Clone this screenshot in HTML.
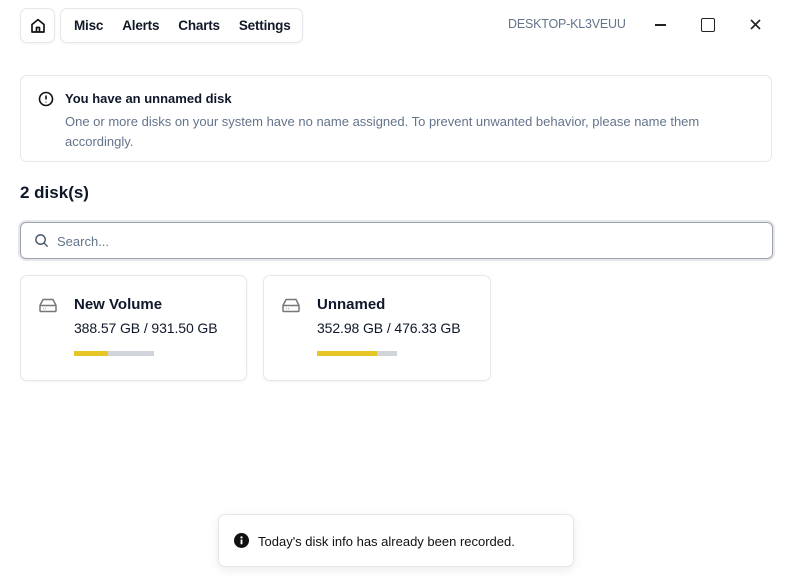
<!DOCTYPE html>
<html><head><style>
*{box-sizing:border-box;margin:0;padding:0}
body{width:793px;height:588px;background:#fff;font-family:"Liberation Sans",sans-serif;color:#0f172a;position:relative;overflow:hidden}
.abs{position:absolute}
.box{border:1px solid #e5e7eb;border-radius:7px;background:#fff;box-shadow:0 1px 2px rgba(0,0,0,.05)}
.nav a{font-size:13.5px;font-weight:600;color:#111827;margin-right:19px;letter-spacing:-0.2px}
</style></head><body>
<div class="abs box" style="left:20px;top:8px;width:35px;height:35px;display:flex;align-items:center;justify-content:center">
<svg width="18" height="18" viewBox="0 0 24 24" fill="none" stroke="#111" stroke-width="2.2" stroke-linejoin="round"><path d="M4 10l8-6.5 8 6.5v10H4z"/><path d="M10 20v-6h4v6"/></svg></div>
<div class="abs box nav" style="left:60px;top:8px;width:243px;height:35px;display:flex;align-items:center;padding-left:13px"><a>Misc</a><a>Alerts</a><a>Charts</a><a style="margin:0">Settings</a></div>
<div class="abs" style="left:508px;top:17px;font-size:12.5px;color:#64748b;letter-spacing:-0.2px">DESKTOP-KL3VEUU</div>
<div class="abs" style="left:655px;top:24px;width:11px;height:1.5px;background:#222"></div>
<div class="abs" style="left:701px;top:18px;width:14px;height:14px;border:1.6px solid #222;border-radius:2px"></div>
<svg class="abs" style="left:750px;top:19px" width="11" height="11" viewBox="0 0 11 11" stroke="#222" stroke-width="1.6"><path d="M1 1l9 9M10 1l-9 9"/></svg>
<div class="abs box" style="left:20px;top:75px;width:752px;height:87px;box-shadow:none">
<svg class="abs" style="left:17px;top:15px" width="16" height="16" viewBox="0 0 16 16" fill="none" stroke="#111" stroke-width="1.6"><circle cx="8" cy="8" r="6.5"/><path d="M8 4.5v4M8 10.8v.6"/></svg>
<div class="abs" style="left:44px;top:15px;font-size:13px;font-weight:700">You have an unnamed disk</div>
<div class="abs" style="left:44px;top:36px;width:700px;font-size:13px;line-height:20px;color:#64748b">One or more disks on your system have no name assigned. To prevent unwanted behavior, please name them accordingly.</div>
</div>
<div class="abs" style="left:20px;top:183px;font-size:17px;font-weight:600">2 disk(s)</div>
<div class="abs" style="left:20px;top:222px;width:753px;height:37px;border:1.5px solid #9ca3af;border-radius:6px;box-shadow:0 0 0 2px #e5e7eb">
<svg class="abs" style="left:13px;top:10px" width="15" height="15" viewBox="0 0 16 16" fill="none" stroke="#475569" stroke-width="1.5"><circle cx="7" cy="7" r="5"/><path d="M11 11l3.5 3.5"/></svg>
<div class="abs" style="left:36px;top:11px;font-size:13px;color:#64748b">Search...</div></div>
<div class="abs box" style="left:20px;top:275px;width:227px;height:106px">
<svg class="abs" style="left:17px;top:21px" width="20" height="17" viewBox="0 0 20 16" fill="none" stroke="#777" stroke-width="1.5"><path d="M2 8l3-6h10l3 6v5a1 1 0 0 1-1 1H3a1 1 0 0 1-1-1z M2 8h16"/><path d="M5 11h.5M7.5 11h.5"/></svg>
<div class="abs" style="left:53px;top:20px;font-size:15px;font-weight:600">New Volume</div>
<div class="abs" style="left:53px;top:44px;font-size:14px;letter-spacing:-0.1px">388.57 GB / 931.50 GB</div>
<div class="abs" style="left:53px;top:75px;width:80px;height:5px;background:#d1d5db"><div style="width:34px;height:5px;background:#e6c627"></div></div></div>
<div class="abs box" style="left:263px;top:275px;width:228px;height:106px">
<svg class="abs" style="left:17px;top:21px" width="20" height="17" viewBox="0 0 20 16" fill="none" stroke="#777" stroke-width="1.5"><path d="M2 8l3-6h10l3 6v5a1 1 0 0 1-1 1H3a1 1 0 0 1-1-1z M2 8h16"/><path d="M5 11h.5M7.5 11h.5"/></svg>
<div class="abs" style="left:53px;top:20px;font-size:15px;font-weight:600">Unnamed</div>
<div class="abs" style="left:53px;top:44px;font-size:14px;letter-spacing:-0.1px">352.98 GB / 476.33 GB</div>
<div class="abs" style="left:53px;top:75px;width:80px;height:5px;background:#d1d5db"><div style="width:60px;height:5px;background:#e6c627"></div></div></div>
<div class="abs box" style="left:218px;top:514px;width:356px;height:53px;box-shadow:0 3px 10px rgba(0,0,0,.08)">
<svg class="abs" style="left:15px;top:18px" width="15" height="15" viewBox="0 0 16 16"><circle cx="8" cy="8" r="8" fill="#111"/><rect x="7" y="7" width="2" height="5" fill="#fff"/><circle cx="8" cy="4.6" r="1.2" fill="#fff"/></svg>
<div class="abs" style="left:39px;top:19px;font-size:13px;color:#111">Today's disk info has already been recorded.</div></div>
</body></html>
